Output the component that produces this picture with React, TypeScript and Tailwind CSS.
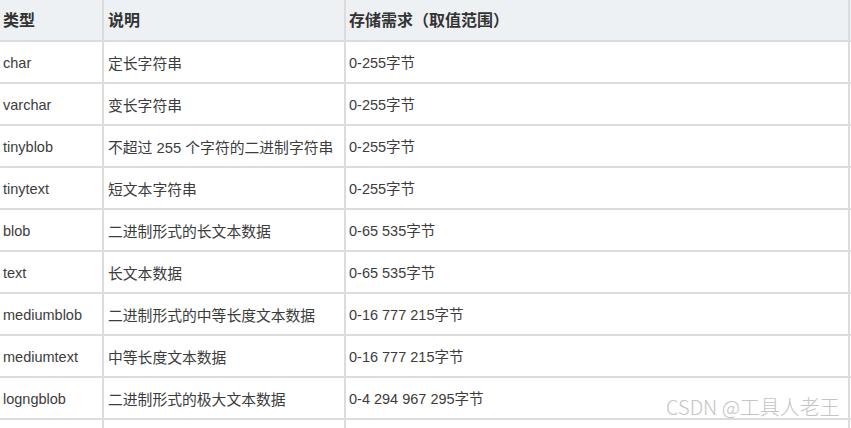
const rows: [string, string, string][] = [
  ["char", "定长字符串", "0-255字节"],
  ["varchar", "变长字符串", "0-255字节"],
  ["tinyblob", "不超过 255 个字符的二进制字符串", "0-255字节"],
  ["tinytext", "短文本字符串", "0-255字节"],
  ["blob", "二进制形式的长文本数据", "0-65 535字节"],
  ["text", "长文本数据", "0-65 535字节"],
  ["mediumblob", "二进制形式的中等长度文本数据", "0-16 777 215字节"],
  ["mediumtext", "中等长度文本数据", "0-16 777 215字节"],
  ["logngblob", "二进制形式的极大文本数据", "0-4 294 967 295字节"],
  ["", "", ""],
];

const font = { fontFamily: '"Liberation Sans", Arial, "Noto Sans CJK SC", sans-serif' };

function Row({ cells, header }: { cells: [string, string, string]; header?: boolean }) {
  const text = header
    ? "pt-px text-[16px] font-bold text-[#333]"
    : "pt-[4px] text-[14.5px] text-[#3c3c3c]";
  const mid = header ? text : "pt-[4px] text-[14.8px] text-[#3c3c3c]";
  return (
    <div
      className={`flex h-[42px] shrink-0 border-b-2 border-[#dcdcdc] ${header ? "bg-[#eef1f4]" : "bg-white"}`}
    >
      <div className={`flex w-[104px] shrink-0 items-center border-r-2 border-[#dcdcdc] pl-[3px] ${text}`}>
        {cells[0]}
      </div>
      <div className={`flex w-[242px] shrink-0 items-center border-r-2 border-[#dcdcdc] pl-[4px] ${mid}`}>
        {cells[1]}
      </div>
      <div className={`flex w-[504px] shrink-0 items-center border-r-2 border-[#dcdcdc] pl-[3px] ${text}`}>
        {cells[2]}
      </div>
    </div>
  );
}

export default function App() {
  return (
    <div className="relative h-[428px] w-[851px] overflow-hidden bg-white" style={font}>
      <div className="flex flex-col">
        <Row header cells={["类型", "说明", "存储需求（取值范围）"]} />
        {rows.map((r, i) => (
          <Row key={i} cells={r} />
        ))}
      </div>
      {/* CSDN watermark */}
      <div
        className="absolute left-[666px] top-[397px] text-[20px] font-light leading-none text-[#c4c4c4]"
        style={{ fontFamily: '"Noto Sans CJK SC", "Noto Sans", sans-serif' }}
      >
        CSDN @工具人老王
      </div>
    </div>
  );
}
